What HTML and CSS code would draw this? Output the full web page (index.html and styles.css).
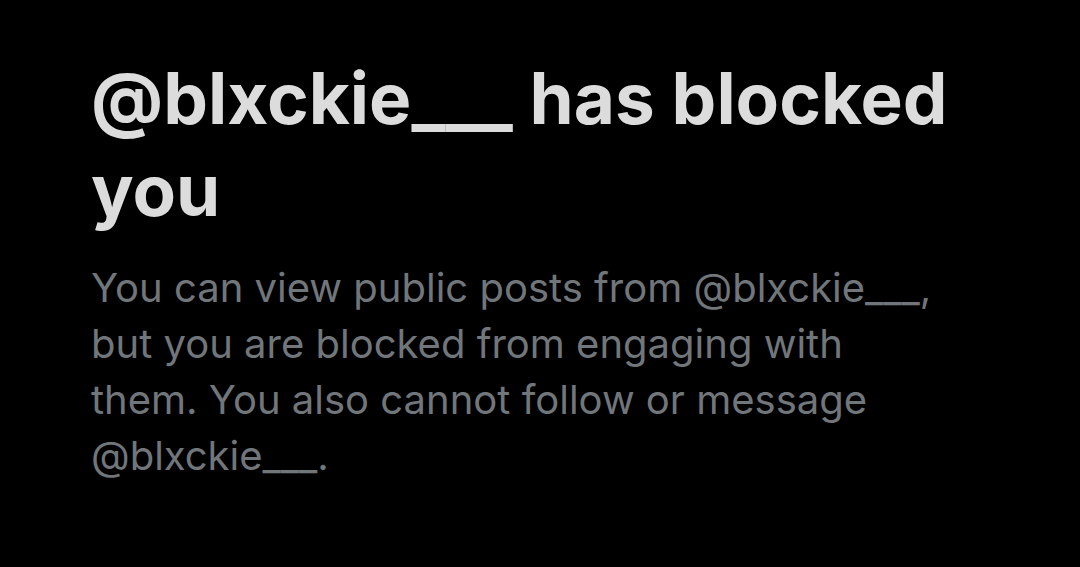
FILE: index.html
```html
<!DOCTYPE html>
<html lang="en">
<head>
    <meta charset="UTF-8">
    <meta name="viewport" content="width=device-width, initial-scale=1.0">
    <title>Blocked</title>
    <link rel="stylesheet" href="styles.css">
</head>
<body>
    <main class="blocked">
        <h1 class="blocked-title">@blxckie___ has blocked you</h1>
        <p class="blocked-text">You can view public posts from @blxckie___, but you are blocked from engaging with them. You also cannot follow or message @blxckie___.</p>
    </main>
</body>
</html>
```

FILE: styles.css
```css
* {
    margin: 0;
    padding: 0;
    box-sizing: border-box;
}
body {
    background-color: #000;
    font-family: Inter, 'Liberation Sans', Arial, sans-serif;
    width: 1080px;
    height: 567px;
    overflow: hidden;
}
.blocked {
    padding: 52px 0 0 91px;
    width: 960px;
}
.blocked-title {
    color: #dcdcdc;
    font-size: 71px;
    font-weight: bold;
    line-height: 92px;
    margin-bottom: 24px;
}
.blocked-text {
    color: #71767b;
    font-size: 40px;
    line-height: 56px;
    width: 852px;
}
```
